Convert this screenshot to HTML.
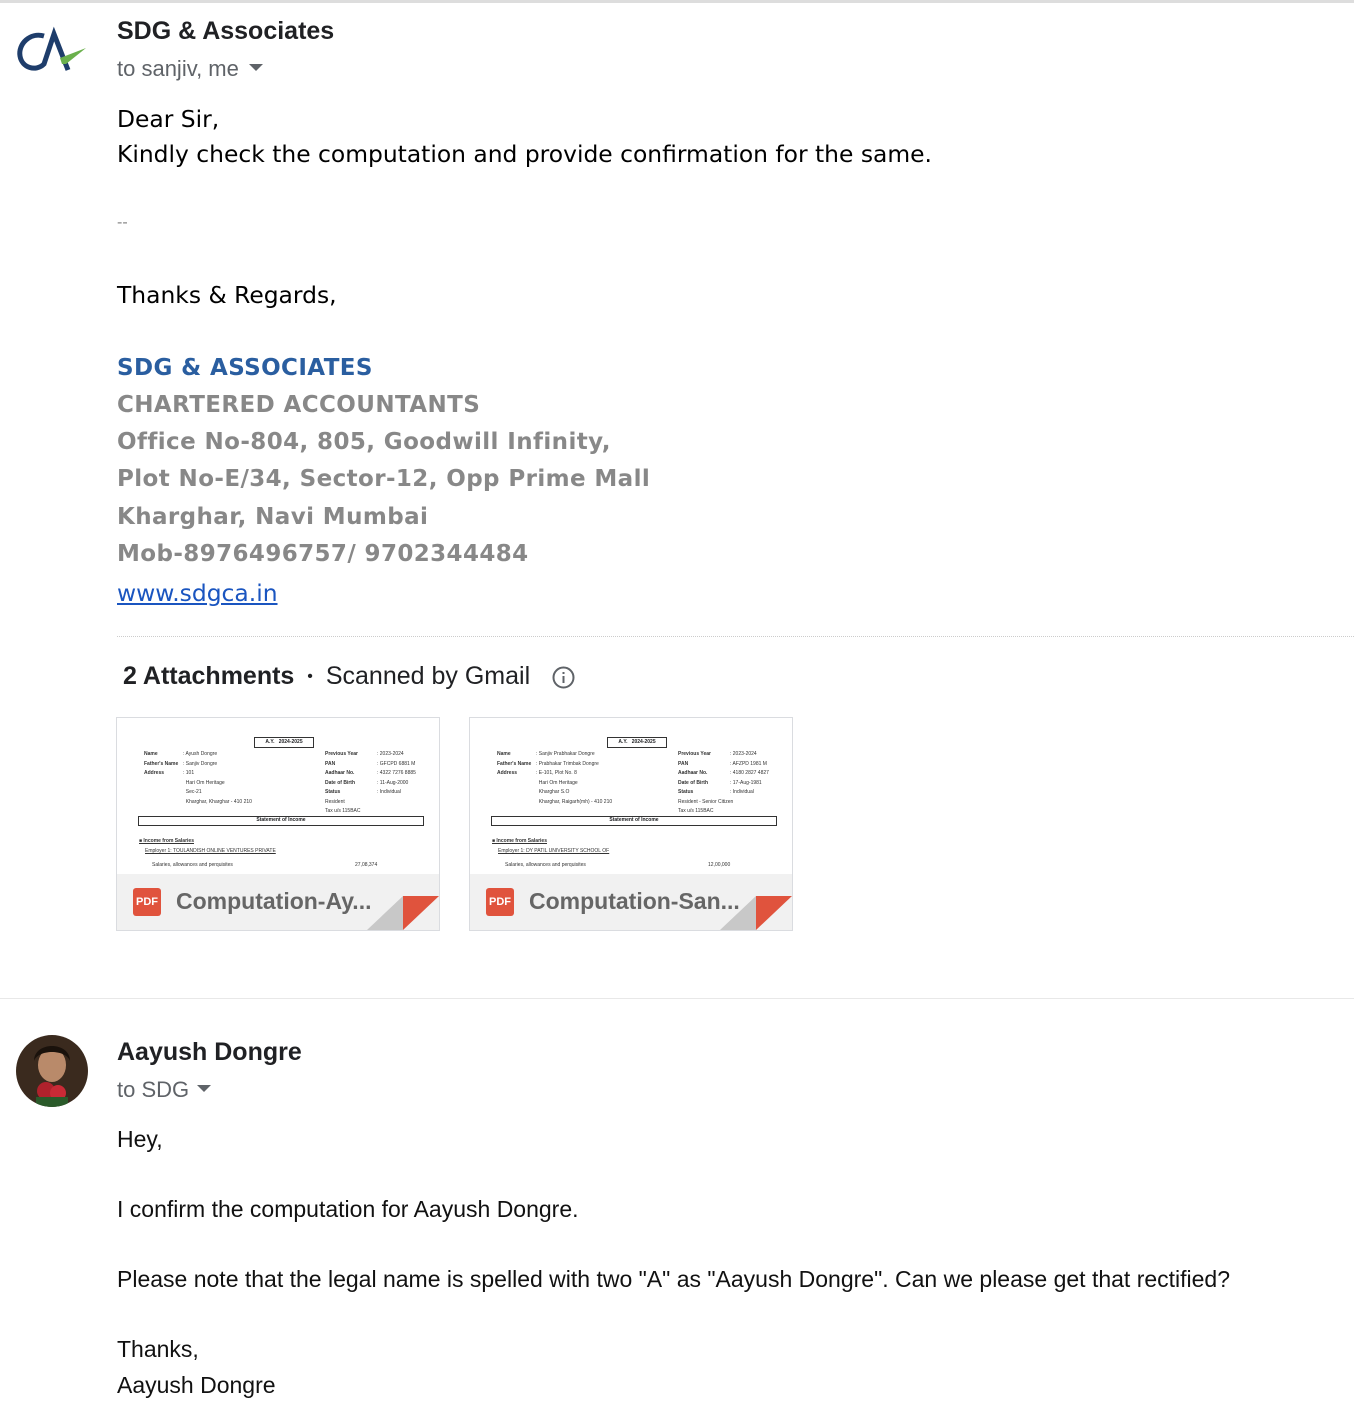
<!DOCTYPE html>
<html><head><meta charset="utf-8"><style>
body{margin:0;width:1354px;height:1416px;background:#fff;position:relative;overflow:hidden;font-family:"Liberation Sans",Arial,sans-serif;color:#202124}
.a{position:absolute;white-space:nowrap}
.dv{font-family:"DejaVu Sans",Verdana,sans-serif}
.sig{font-family:"DejaVu Sans",Verdana,sans-serif;font-weight:bold;font-size:23px;color:#888;letter-spacing:0.4px}
.card{position:absolute;width:322px;height:212px;border:1px solid #dadce0;background:#fff;overflow:hidden}
.card .bar{position:absolute;left:0;top:156px;width:322px;height:56px;background:#f1f1f1}
.card .pdf{position:absolute;left:16px;top:170px;width:28px;height:28px;background:#e0533d;border-radius:3px;color:#fff;font-size:11px;font-weight:bold;text-align:center;line-height:28px}
.card .nm{position:absolute;left:59px;top:170px;font-size:23px;font-weight:bold;color:#666}
.t{position:absolute;font-size:5px;color:#333;white-space:nowrap}
.tb{font-weight:bold}
</style></head><body>
<div class="a" style="left:0;top:0;width:1354px;height:3px;background:#ddd"></div>
<svg class="a" style="left:14px;top:14px" width="74" height="72" viewBox="0 0 74 72">
<circle cx="37" cy="36" r="36" fill="#fff"/>
<path d="M30 22 C16 18 4 30 6 42 C8 54 22 58 30 50 L40 20 L54 56" fill="none" stroke="#1e3d6b" stroke-width="5"/>
<path d="M46 44 L72 34 L52 50 L48 50 Z" fill="#6ab04c"/>
</svg>
<div class="a" style="left:117px;top:17px;font-size:25px;font-weight:bold">SDG &amp; Associates</div>
<div class="a" style="left:117px;top:56px;font-size:22px;color:#5f6368">to sanjiv, me</div>
<svg class="a" style="left:249px;top:64px" width="14" height="8"><path d="M0 0 L14 0 L7 7Z" fill="#5f6368"/></svg>
<div class="a dv" style="left:117px;top:105px;font-size:23.4px;color:#000">Dear Sir,</div>
<div class="a dv" style="left:117px;top:140px;font-size:23.4px;color:#000">Kindly check the computation and provide confirmation for the same.</div>
<div class="a" style="left:117px;top:214px;font-size:16px;color:#888">--</div>
<div class="a dv" style="left:117px;top:281px;font-size:23.4px;color:#000">Thanks &amp; Regards,</div>
<div class="a sig" style="left:117px;top:355px;color:#2a5ea0">SDG &amp; ASSOCIATES</div>
<div class="a sig" style="left:117px;top:392px">CHARTERED ACCOUNTANTS</div>
<div class="a sig" style="left:117px;top:429px">Office No-804, 805, Goodwill Infinity,</div>
<div class="a sig" style="left:117px;top:466px">Plot No-E/34, Sector-12, Opp Prime Mall</div>
<div class="a sig" style="left:117px;top:504px">Kharghar, Navi Mumbai</div>
<div class="a sig" style="left:117px;top:541px">Mob-8976496757/ 9702344484</div>
<div class="a dv" style="left:117px;top:579px;font-size:23.4px;color:#1a55c0;text-decoration:underline">www.sdgca.in</div>
<div class="a" style="left:117px;top:636px;width:1237px;border-top:1px dotted #ccc"></div>
<div class="a" style="left:123px;top:662px;font-size:25px"><b>2 Attachments</b> <span style="margin:0 6px;font-size:16px;vertical-align:3px">•</span> Scanned by Gmail</div>
<svg class="a" style="left:552px;top:666px" width="23" height="23"><circle cx="11.5" cy="11.5" r="10" fill="none" stroke="#5f6368" stroke-width="2"/><rect x="10.5" y="10" width="2" height="7" fill="#5f6368"/><rect x="10.5" y="6" width="2" height="2" fill="#5f6368"/></svg>

<div class="card" style="left:116px;top:717px">
<div class="a" style="left:137px;top:19px;width:58px;height:9px;border:1px solid #333;font-size:5px;text-align:center;line-height:9px;font-weight:bold">A.Y. &nbsp; 2024-2025</div>
<div class="t tb" style="left:27px;top:32px;line-height:9.5px">Name<br>Father's Name<br>Address</div>
<div class="t" style="left:66px;top:32px;line-height:9.5px">: Ayush Dongre<br>: Sanjiv Dongre<br>: 101<br>&nbsp; Hari Om Heritage<br>&nbsp; Sec-21<br>&nbsp; Kharghar, Kharghar - 410 210</div>
<div class="t tb" style="left:208px;top:32px;line-height:9.5px">Previous Year<br>PAN<br>Aadhaar No.<br>Date of Birth<br>Status<br><span style="font-weight:normal">Resident<br>Tax u/s 115BAC</span></div>
<div class="t" style="left:260px;top:32px;line-height:9.5px">: 2023-2024<br>: GFCPD 6881 M<br>: 4322 7276 8885<br>: 11-Aug-2000<br>: Individual</div>
<div class="a" style="left:21px;top:98px;width:284px;height:8px;border:1px solid #333;font-size:5px;text-align:center;font-weight:bold">Statement of Income</div>
<div class="t tb" style="left:22px;top:120px;text-decoration:underline">■ Income from Salaries</div>
<div class="t" style="left:28px;top:130px;text-decoration:underline">Employer 1: TOULANDISH ONLINE VENTURES PRIVATE</div>
<div class="t" style="left:35px;top:144px">Salaries, allowances and perquisites</div><div class="t" style="left:238px;top:144px">27,08,374</div>
<div class="bar"></div><div class="pdf">PDF</div><div class="nm">Computation-Ay...</div>
<svg class="a" style="left:250px;top:178px" width="72" height="34"><path d="M36 0 L36 34 L0 34Z" fill="#c8c8c8"/><path d="M36 0 L72 0 L36 34Z" fill="#e0533d"/></svg>
</div>

<div class="card" style="left:469px;top:717px">
<div class="a" style="left:137px;top:19px;width:58px;height:9px;border:1px solid #333;font-size:5px;text-align:center;line-height:9px;font-weight:bold">A.Y. &nbsp; 2024-2025</div>
<div class="t tb" style="left:27px;top:32px;line-height:9.5px">Name<br>Father's Name<br>Address</div>
<div class="t" style="left:66px;top:32px;line-height:9.5px">: Sanjiv Prabhakar Dongre<br>: Prabhakar Trimbak Dongre<br>: E-101, Plot No. 8<br>&nbsp; Hari Om Heritage<br>&nbsp; Kharghar S.O<br>&nbsp; Kharghar, Raigarh(mh) - 410 210</div>
<div class="t tb" style="left:208px;top:32px;line-height:9.5px">Previous Year<br>PAN<br>Aadhaar No.<br>Date of Birth<br>Status<br><span style="font-weight:normal">Resident - Senior Citizen<br>Tax u/s 115BAC</span></div>
<div class="t" style="left:260px;top:32px;line-height:9.5px">: 2023-2024<br>: AFZPD 1981 M<br>: 4180 2827 4827<br>: 17-Aug-1981<br>: Individual</div>
<div class="a" style="left:21px;top:98px;width:284px;height:8px;border:1px solid #333;font-size:5px;text-align:center;font-weight:bold">Statement of Income</div>
<div class="t tb" style="left:22px;top:120px;text-decoration:underline">■ Income from Salaries</div>
<div class="t" style="left:28px;top:130px;text-decoration:underline">Employer 1: DY PATIL UNIVERSITY SCHOOL OF</div>
<div class="t" style="left:35px;top:144px">Salaries, allowances and perquisites</div><div class="t" style="left:238px;top:144px">12,00,000</div>
<div class="bar"></div><div class="pdf">PDF</div><div class="nm">Computation-San...</div>
<svg class="a" style="left:250px;top:178px" width="72" height="34"><path d="M36 0 L36 34 L0 34Z" fill="#c8c8c8"/><path d="M36 0 L72 0 L36 34Z" fill="#e0533d"/></svg>
</div>

<div class="a" style="left:0;top:998px;width:1354px;border-top:1px solid #e8e8e8"></div>
<svg class="a" style="left:16px;top:1035px" width="72" height="72"><defs><clipPath id="c"><circle cx="36" cy="36" r="36"/></clipPath></defs><g clip-path="url(#c)"><rect width="72" height="72" fill="#3a2a1e"/><ellipse cx="36" cy="30" rx="14" ry="17" fill="#b98a6a"/><path d="M18 26 C18 6 54 6 54 26 C50 14 22 14 18 26Z" fill="#1a120c"/><circle cx="30" cy="56" r="9" fill="#b0222c"/><circle cx="42" cy="58" r="8" fill="#c92a36"/><rect x="20" y="62" width="32" height="10" fill="#2a5a2a"/></g></svg>
<div class="a" style="left:117px;top:1038px;font-size:25px;font-weight:bold">Aayush Dongre</div>
<div class="a" style="left:117px;top:1077px;font-size:22px;color:#5f6368">to SDG</div>
<svg class="a" style="left:197px;top:1085px" width="14" height="8"><path d="M0 0 L14 0 L7 7Z" fill="#5f6368"/></svg>
<div class="a" style="left:117px;top:1126px;font-size:23px;color:#111">Hey,</div>
<div class="a" style="left:117px;top:1196px;font-size:23px;color:#111">I confirm the computation for Aayush Dongre.</div>
<div class="a" style="left:117px;top:1266px;font-size:23px;color:#111">Please note that the legal name is spelled with two "A" as "Aayush Dongre". Can we please get that rectified?</div>
<div class="a" style="left:117px;top:1336px;font-size:23px;color:#111">Thanks,</div>
<div class="a" style="left:117px;top:1372px;font-size:23px;color:#111">Aayush Dongre</div>
</body></html>
